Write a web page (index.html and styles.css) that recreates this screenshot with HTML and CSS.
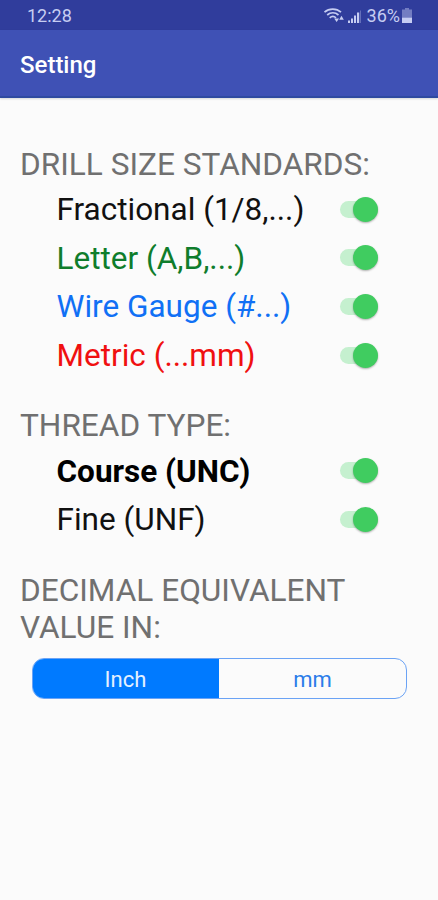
FILE: index.html
```html
<!DOCTYPE html>
<html lang="en">
<head>
  <meta charset="UTF-8">
  <meta name="viewport" content="width=device-width, initial-scale=1.0">
  <title>Setting</title>
  <link rel="stylesheet" href="styles.css">
</head>
<body>
  <div class="status-bar">
    <span class="clock">12:28</span>
    <div class="status-icons">
      <svg class="wifi" width="22" height="17" viewBox="0 0 22 17" fill="none" stroke="currentColor" stroke-width="1.7">
        <path d="M.5 5.2C5 1 12.5 1 17 5.2"/>
        <path d="M3.2 8C6.500 5 11.200 5 14.500 8"/>
        <path d="M5.700 10.800C7.700 9.100 10 9.100 12 10.800"/>
        <path d="M10.200 11.500h4.800l-2.400 3.500z" fill="currentColor" stroke="none"/>
        <path d="M15.200 12.800h4.600l-2.300-4z" fill="currentColor" stroke="none"/>
      </svg>
      <svg class="signal" width="13" height="14" viewBox="0 0 13 14" fill="currentColor">
        <path d="M0 10.500h2V13H0zM3 8.500h2V13H3zM6 5.500h2V13H6zM9 2.500h2.200V13H9z"/>
        <path d="M12 .5h1V13h-1z" opacity=".35"/>
      </svg>
      <span class="percent">36%</span>
      <svg class="battery" width="10" height="15" viewBox="0 0 10 15" fill="currentColor">
        <path d="M3 0h4v1.500h3V9.500H0v-8h3z" opacity=".45"/>
        <path d="M0 9.500h10V15H0z"/>
      </svg>
    </div>
  </div>
  <header class="app-bar">Setting</header>

  <main class="settings">
    <!-- Drill sizes -->
    <section>
      <h2>DRILL SIZE STANDARDS:</h2>
      <label class="row"><span class="name fractional">Fractional (1/8,...)</span><input type="checkbox" class="switch" checked></label>
      <label class="row"><span class="name letter">Letter (A,B,...)</span><input type="checkbox" class="switch" checked></label>
      <label class="row"><span class="name wire">Wire Gauge (#...)</span><input type="checkbox" class="switch" checked></label>
      <label class="row"><span class="name metric">Metric (...mm)</span><input type="checkbox" class="switch" checked></label>
    </section>

    <!-- Threads -->
    <section>
      <h2>THREAD TYPE:</h2>
      <label class="row"><span class="name course">Course (UNC)</span><input type="checkbox" class="switch" checked></label>
      <label class="row"><span class="name fine">Fine (UNF)</span><input type="checkbox" class="switch" checked></label>
    </section>

    <!-- Units -->
    <section>
      <h2>DECIMAL EQUIVALENT VALUE IN:</h2>
      <div class="segmented">
        <button class="segment active">Inch</button>
        <button class="segment">mm</button>
      </div>
    </section>
  </main>

  <script>
    const segments = document.querySelectorAll('.segment');

    segments.forEach(segment => {
      segment.addEventListener('click', () => {
        segments.forEach(s => s.classList.remove('active'));
        segment.classList.add('active');
      });
    });
  </script>
</body>
</html>
```
FILE: styles.css
```css
* {
  box-sizing: border-box;
}

body {
  font-family: Roboto, sans-serif;
  margin: 0;
  min-height: 100vh;
  background-color: #fbfbfb;
}

.status-bar {
  display: flex;
  justify-content: space-between;
  align-items: center;
  height: 30px;
  padding: 1px 26px 0 27px;
  background-color: #303d9c;
  color: #c6cdf2;
  font-size: 18px;
}

.status-icons {
  display: flex;
  align-items: center;
}

.signal {
  margin: 2px 6px 0 2px;
}

.battery {
  margin-left: 2px;
}

.app-bar {
  display: flex;
  align-items: center;
  height: 68px;
  padding: 4px 20px 0;
  background-color: #3f51b5;
  border-bottom: 2px solid #2f4aa0;
  box-shadow: 0 1px 2px rgba(0, 0, 0, 0.15);
  color: white;
  font-size: 24px;
  font-weight: 500;
}

.settings {
  padding: 48px 31px 0 20px;
}

section {
  margin-bottom: 28px;
}

h2 {
  margin: 0 0 2px;
  color: #707070;
  font-size: 31.6px;
  font-weight: 400;
  line-height: 37px;
}

.row {
  display: flex;
  justify-content: space-between;
  align-items: center;
  height: 48.6px;
  padding: 0 29px 0 36.5px;
}

.name {
  padding-top: 1px;
  font-size: 31.5px;
}

.fractional {
  color: #111;
}

.letter {
  color: #0f7d2c;
}

.wire {
  color: #1070f5;
}

.metric {
  color: #f01010;
}

.course {
  color: #000;
  font-weight: bold;
}

.fine {
  color: #111;
}

.switch {
  appearance: none;
  display: flex;
  align-items: center;
  width: 38px;
  height: 17px;
  margin: 0;
  border-radius: 9px;
  background-color: #c5f0cf;
}

.switch::before {
  content: "";
  width: 25px;
  height: 25px;
  border-radius: 50%;
  background-color: #999;
  box-shadow: 0 1px 2px rgba(0, 0, 0, 0.3);
}

.switch:checked::before {
  margin-left: 13px;
  background-color: #40cc60;
}

.segmented {
  display: flex;
  height: 41px;
  margin: 12.5px 0 0 12px;
  border: 1px solid #6ba3f5;
  border-radius: 12px;
  overflow: hidden;
}

.segment {
  flex: 1;
  padding: 2px 0 0;
  border: none;
  background: none;
  color: #2b7de9;
  font-family: inherit;
  font-size: 22px;
}

.segment.active {
  margin: -1px 0 -1px -1px;
  background-color: #007aff;
  color: #e3f0ff;
}
```
